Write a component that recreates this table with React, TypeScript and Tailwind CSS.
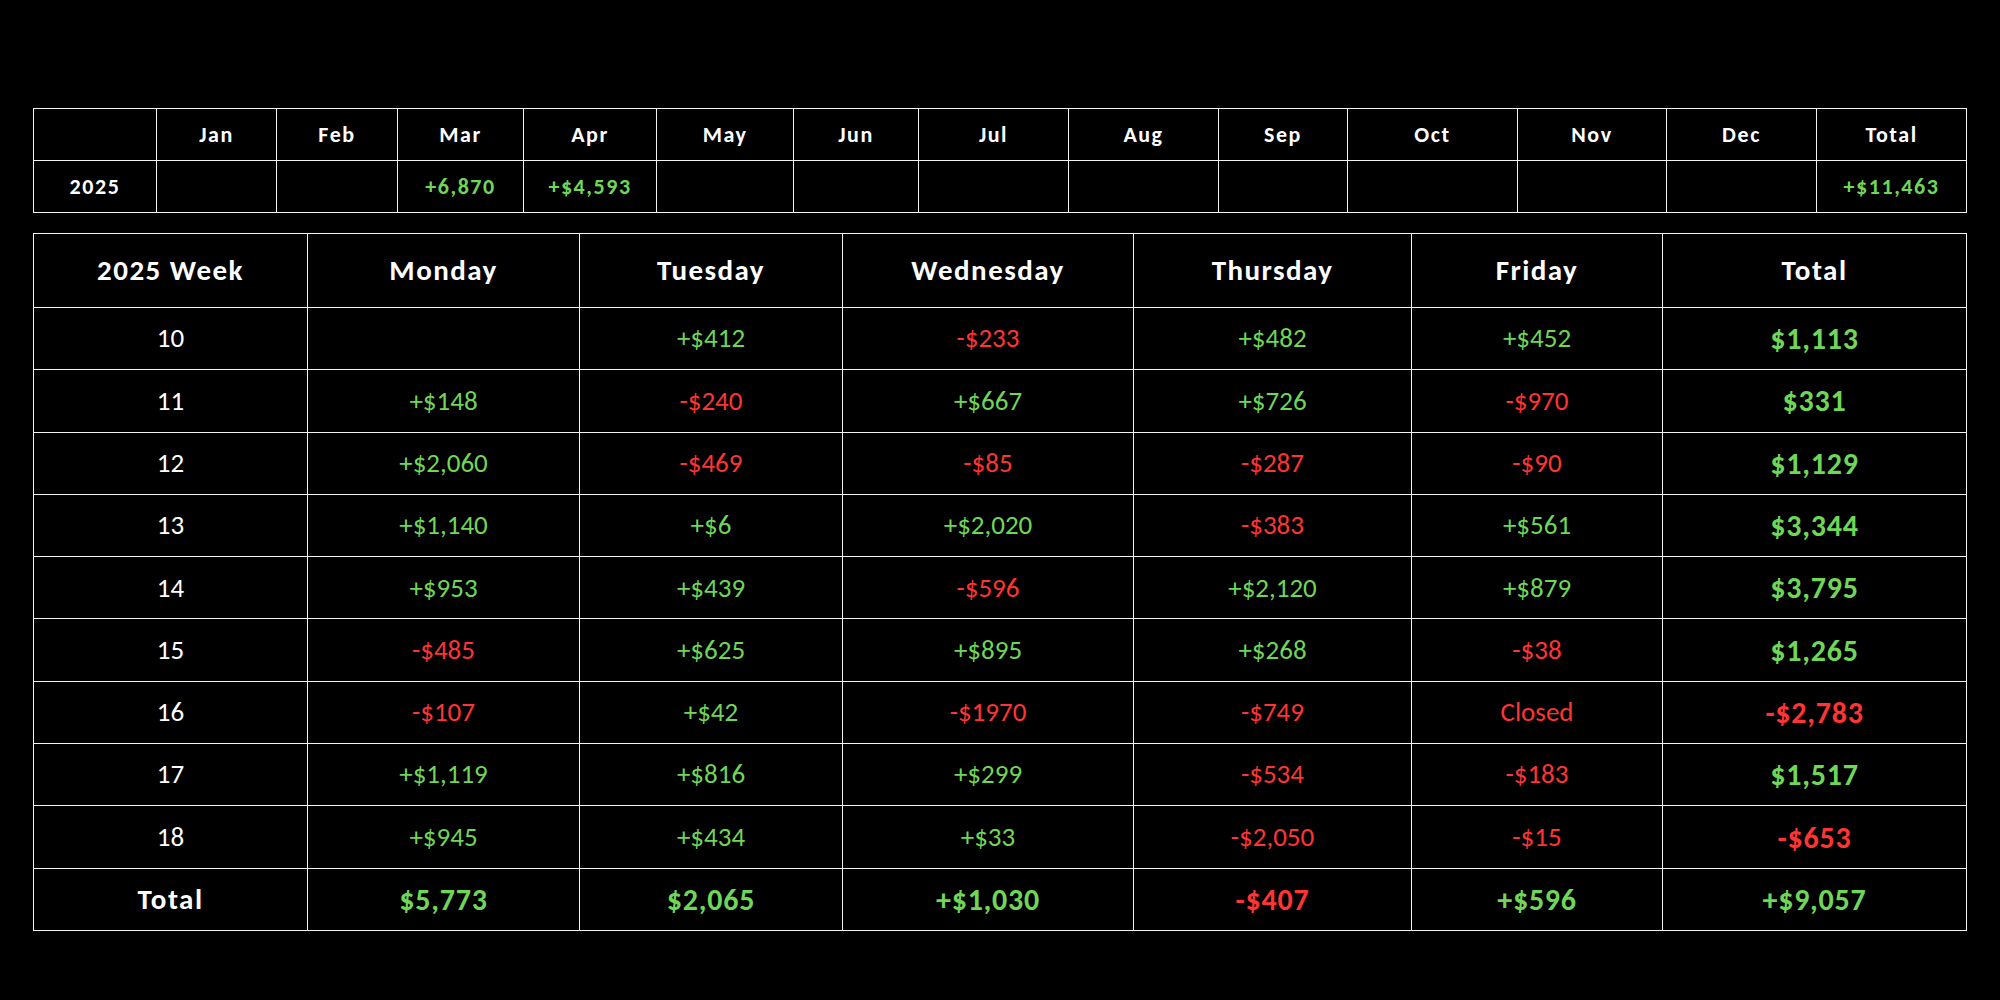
import React from 'react';

type Cell = string | null;

const months = ['Jan', 'Feb', 'Mar', 'Apr', 'May', 'Jun', 'Jul', 'Aug', 'Sep', 'Oct', 'Nov', 'Dec', 'Total'];
const monthWidths = [123, 120, 121, 126, 133, 137, 125, 150, 150, 129, 170, 149, 150, 150];
const monthValues: Cell[] = [null, null, '+6,870', '+$4,593', null, null, null, null, null, null, null, null, '+$11,463'];

const days = ['2025 Week', 'Monday', 'Tuesday', 'Wednesday', 'Thursday', 'Friday', 'Total'];
const dayWidths = [274, 272, 263, 291, 278, 251, 304];

const weeks: { week: string; days: Cell[]; total: string }[] = [
  { week: '10', days: [null, '+$412', '-$233', '+$482', '+$452'], total: '$1,113' },
  { week: '11', days: ['+$148', '-$240', '+$667', '+$726', '-$970'], total: '$331' },
  { week: '12', days: ['+$2,060', '-$469', '-$85', '-$287', '-$90'], total: '$1,129' },
  { week: '13', days: ['+$1,140', '+$6', '+$2,020', '-$383', '+$561'], total: '$3,344' },
  { week: '14', days: ['+$953', '+$439', '-$596', '+$2,120', '+$879'], total: '$3,795' },
  { week: '15', days: ['-$485', '+$625', '+$895', '+$268', '-$38'], total: '$1,265' },
  { week: '16', days: ['-$107', '+$42', '-$1970', '-$749', 'Closed'], total: '-$2,783' },
  { week: '17', days: ['+$1,119', '+$816', '+$299', '-$534', '-$183'], total: '$1,517' },
  { week: '18', days: ['+$945', '+$434', '+$33', '-$2,050', '-$15'], total: '-$653' },
];

const totals = ['$5,773', '$2,065', '+$1,030', '-$407', '+$596', '+$9,057'];

const tone = (v: string) => (v.startsWith('-') || v === 'Closed' ? 'text-[#ff3434]' : 'text-[#70d658]');

const cellBorder = 'border border-[#f2f2f2]';

export default function App() {
  return (
    <div
      className="min-h-[1000px] w-[2000px] bg-black pt-[108px] px-[33px]"
      style={{ fontFamily: 'Carlito, Calibri, Lato, sans-serif' }}
    >
      {/* Monthly summary */}
      <table className="w-[1934px] table-fixed border-collapse text-white">
        <colgroup>
          {monthWidths.map((w, i) => (
            <col key={i} style={{ width: w }} />
          ))}
        </colgroup>
        <thead>
          <tr className="h-[52px]">
            <th className={cellBorder}></th>
            {months.map((m) => (
              <th key={m} className={`${cellBorder} text-[22px] font-bold tracking-[0.07em]`}>
                {m}
              </th>
            ))}
          </tr>
        </thead>
        <tbody>
          <tr className="h-[52px]">
            <td className={`${cellBorder} text-center text-[22px] font-bold tracking-[0.07em]`}>2025</td>
            {monthValues.map((v, i) => (
              <td key={i} className={`${cellBorder} text-center text-[22px] font-bold tracking-[0.07em] ${v ? tone(v) : ''}`}>
                {v}
              </td>
            ))}
          </tr>
        </tbody>
      </table>

      {/* Weekly breakdown */}
      <table className="mt-5 w-[1934px] table-fixed border-collapse text-white">
        <colgroup>
          {dayWidths.map((w, i) => (
            <col key={i} style={{ width: w }} />
          ))}
        </colgroup>
        <thead>
          <tr className="h-[74px]">
            {days.map((d) => (
              <th key={d} className={`${cellBorder} text-[29px] font-bold tracking-[0.05em]`}>
                {d}
              </th>
            ))}
          </tr>
        </thead>
        <tbody>
          {weeks.map((w) => (
            <tr key={w.week} className="h-[62.3px]">
              <td className={`${cellBorder} text-center text-[27px]`}>{w.week}</td>
              {w.days.map((v, i) => (
                <td key={i} className={`${cellBorder} text-center text-[27px] ${v ? tone(v) : ''}`}>
                  {v}
                </td>
              ))}
              <td className={`${cellBorder} text-center text-[30px] font-bold tracking-[0.025em] ${tone(w.total)}`}>
                {w.total}
              </td>
            </tr>
          ))}
          <tr className="h-[62.3px]">
            <td className={`${cellBorder} text-center text-[29px] font-bold tracking-[0.05em]`}>Total</td>
            {totals.map((v, i) => (
              <td key={i} className={`${cellBorder} text-center text-[30px] font-bold tracking-[0.025em] ${tone(v)}`}>
                {v}
              </td>
            ))}
          </tr>
        </tbody>
      </table>
    </div>
  );
}
